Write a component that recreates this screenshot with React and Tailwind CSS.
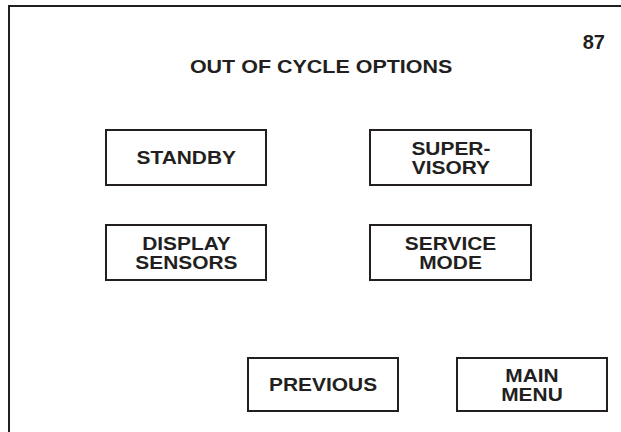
import React from 'react';

const ink = 'border-[#231f20]';

const OptionBox = ({ lines, className = '' }) => (
  <button
    className={`flex items-center justify-center border-2 ${ink} bg-white text-[19px] font-bold leading-[19px] text-[#231f20] ${className}`}
  >
    <span className="inline-block scale-x-[1.1] text-center">
      {lines.map((line, i) => (
        <span key={i} className="block">
          {line}
        </span>
      ))}
    </span>
  </button>
);

const App = () => {
  return (
    <div className="w-[621px] h-[432px] overflow-hidden bg-white font-['Liberation_Sans',Arial,sans-serif] text-[#231f20]">
      <div className={`ml-2 mt-[5px] h-[427px] border-l-2 border-t-2 ${ink} flex flex-col`}>
        {/* screen number */}
        <div className="flex justify-end pr-[16px] pt-[26px]">
          <span className="text-[20px] font-bold leading-[18px]">87</span>
        </div>

        <h1 className="mt-[7px] pl-[11px] text-center text-[19px] font-bold leading-[18px]">
          <span className="inline-block scale-x-[1.13]">OUT OF CYCLE OPTIONS</span>
        </h1>

        <div className="mt-[53px] flex flex-col gap-[38px] pl-[95px]">
          <div className="flex gap-[102px]">
            <OptionBox lines={['STANDBY']} className="w-[162px] h-[57px]" />
            <OptionBox lines={['SUPER-', 'VISORY']} className="w-[163px] h-[57px]" />
          </div>
          <div className="flex gap-[102px]">
            <OptionBox lines={['DISPLAY', 'SENSORS']} className="w-[162px] h-[57px]" />
            <OptionBox lines={['SERVICE', 'MODE']} className="w-[163px] h-[57px]" />
          </div>
        </div>

        <div className="mt-[76px] flex gap-[57px] pl-[237px]">
          <OptionBox lines={['PREVIOUS']} className="w-[152px] h-[55px]" />
          <OptionBox lines={['MAIN', 'MENU']} className="w-[152px] h-[55px]" />
        </div>
      </div>
    </div>
  );
};

export default App;
